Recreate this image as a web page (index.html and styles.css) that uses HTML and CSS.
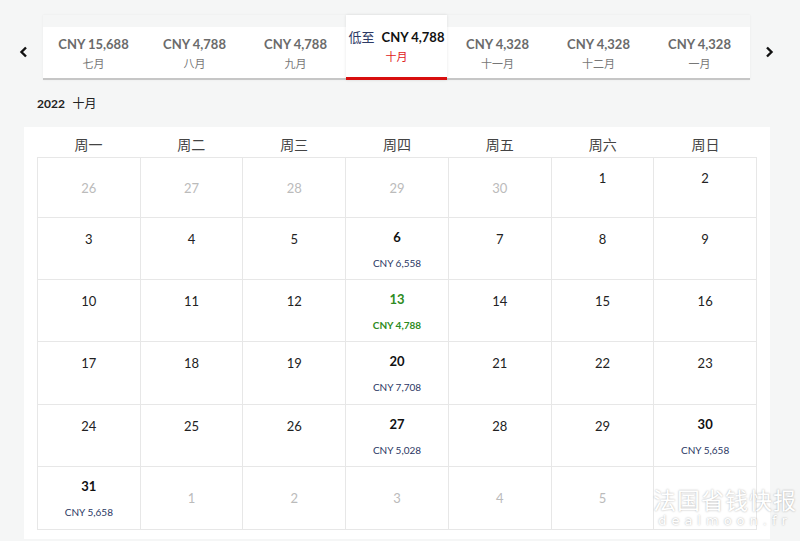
FILE: index.html
```html
<!DOCTYPE html>
<html lang="zh">
<head>
    <meta charset="UTF-8">
    <meta name="viewport" content="width=device-width, initial-scale=1.0">
    <title>低价日历</title>
    <link rel="stylesheet" href="styles.css">
</head>
<body>
    <div class="months">
        <div class="arrow"><svg width="9" height="12" viewBox="0 0 9 12"><path d="M7 1.5 L2.5 6 L7 10.5" fill="none" stroke="#111" stroke-width="2.4"/></svg></div>
        <div class="tabs">
            <div class="tab"><div class="tab-price">CNY 15,688</div><div class="tab-month">七月</div></div>
            <div class="tab"><div class="tab-price">CNY 4,788</div><div class="tab-month">八月</div></div>
            <div class="tab"><div class="tab-price">CNY 4,788</div><div class="tab-month">九月</div></div>
            <div class="tab active"><div class="tab-price"><span class="from">低至</span>CNY 4,788</div><div class="tab-month">十月</div></div>
            <div class="tab"><div class="tab-price">CNY 4,328</div><div class="tab-month">十一月</div></div>
            <div class="tab"><div class="tab-price">CNY 4,328</div><div class="tab-month">十二月</div></div>
            <div class="tab"><div class="tab-price">CNY 4,328</div><div class="tab-month">一月</div></div>
        </div>
        <div class="arrow right"><svg width="9" height="12" viewBox="0 0 9 12"><path d="M2 1.5 L6.5 6 L2 10.5" fill="none" stroke="#111" stroke-width="2.4"/></svg></div>
    </div>

    <h3 class="title"><b>2022</b> 十月</h3>

    <div class="panel">
        <div class="weekdays">
            <div>周一</div><div>周二</div><div>周三</div><div>周四</div><div>周五</div><div>周六</div><div>周日</div>
        </div>
        <div class="grid">
            <div class="cell out"><div class="num">26</div></div>
            <div class="cell out"><div class="num">27</div></div>
            <div class="cell out"><div class="num">28</div></div>
            <div class="cell out"><div class="num">29</div></div>
            <div class="cell out"><div class="num">30</div></div>
            <div class="cell"><div class="num">1</div><div class="price empty"></div></div>
            <div class="cell"><div class="num">2</div><div class="price empty"></div></div>

            <div class="cell"><div class="num">3</div><div class="price empty"></div></div>
            <div class="cell"><div class="num">4</div><div class="price empty"></div></div>
            <div class="cell"><div class="num">5</div><div class="price empty"></div></div>
            <div class="cell has"><div class="num">6</div><div class="price">CNY 6,558</div></div>
            <div class="cell"><div class="num">7</div><div class="price empty"></div></div>
            <div class="cell"><div class="num">8</div><div class="price empty"></div></div>
            <div class="cell"><div class="num">9</div><div class="price empty"></div></div>

            <div class="cell"><div class="num">10</div><div class="price empty"></div></div>
            <div class="cell"><div class="num">11</div><div class="price empty"></div></div>
            <div class="cell"><div class="num">12</div><div class="price empty"></div></div>
            <div class="cell has low"><div class="num">13</div><div class="price">CNY 4,788</div></div>
            <div class="cell"><div class="num">14</div><div class="price empty"></div></div>
            <div class="cell"><div class="num">15</div><div class="price empty"></div></div>
            <div class="cell"><div class="num">16</div><div class="price empty"></div></div>

            <div class="cell"><div class="num">17</div><div class="price empty"></div></div>
            <div class="cell"><div class="num">18</div><div class="price empty"></div></div>
            <div class="cell"><div class="num">19</div><div class="price empty"></div></div>
            <div class="cell has"><div class="num">20</div><div class="price">CNY 7,708</div></div>
            <div class="cell"><div class="num">21</div><div class="price empty"></div></div>
            <div class="cell"><div class="num">22</div><div class="price empty"></div></div>
            <div class="cell"><div class="num">23</div><div class="price empty"></div></div>

            <div class="cell"><div class="num">24</div><div class="price empty"></div></div>
            <div class="cell"><div class="num">25</div><div class="price empty"></div></div>
            <div class="cell"><div class="num">26</div><div class="price empty"></div></div>
            <div class="cell has"><div class="num">27</div><div class="price">CNY 5,028</div></div>
            <div class="cell"><div class="num">28</div><div class="price empty"></div></div>
            <div class="cell"><div class="num">29</div><div class="price empty"></div></div>
            <div class="cell has"><div class="num">30</div><div class="price">CNY 5,658</div></div>

            <div class="cell has"><div class="num">31</div><div class="price">CNY 5,658</div></div>
            <div class="cell out"><div class="num">1</div></div>
            <div class="cell out"><div class="num">2</div></div>
            <div class="cell out"><div class="num">3</div></div>
            <div class="cell out"><div class="num">4</div></div>
            <div class="cell out"><div class="num">5</div></div>
            <div class="cell out"></div>
        </div>
    </div>

    <div class="watermark">
        <div class="wm-cn">法国省钱快报</div>
        <div class="wm-en">dealmoon.fr</div>
    </div>
</body>
</html>
```

FILE: styles.css
```css
* {
    margin: 0;
    padding: 0;
    box-sizing: border-box;
}

body {
    background-color: #f5f6f6;
    font-family: "Lato", "Noto Sans CJK SC", sans-serif;
    color: #222;
    width: 800px;
    height: 541px;
    overflow: hidden;
    position: relative;
}

.months {
    display: flex;
    align-items: flex-end;
    padding-top: 15px;
}

.arrow {
    width: 43px;
    height: 53px;
    display: flex;
    align-items: center;
    justify-content: center;
    padding-bottom: 4px;
    padding-left: 3px;
}

.arrow.right {
    width: 50px;
    justify-content: flex-start;
    padding-left: 15px;
}

.tabs {
    display: flex;
    align-items: flex-end;
    width: 707px;
    box-shadow: 0 0 2px rgba(0, 0, 0, 0.06);
}

.tab {
    width: 101px;
    height: 53px;
    background-color: #fff;
    border-bottom: 2px solid #c6c6c6;
    text-align: center;
    padding-top: 9px;
}

.tab-price {
    font-size: 13px;
    font-weight: bold;
    color: #6b6b6b;
    line-height: 16px;
}

.tab-month {
    font-family: "Noto Sans CJK SC", sans-serif;
    font-size: 11px;
    color: #777;
    line-height: 18px;
    margin-top: 2px;
}

.tab.active {
    height: 65px;
    padding-top: 14px;
    border-bottom: 3px solid #d80f0f;
    position: relative;
    z-index: 1;
    box-shadow: 0 0 3px rgba(0, 0, 0, 0.1);
}

.tab.active .tab-price {
    color: #111;
}

.tab.active .tab-month {
    color: #e02020;
}

.from {
    font-family: "Noto Sans CJK SC", sans-serif;
    font-weight: normal;
    color: #2e3a66;
    margin-right: 7px;
}

.title {
    font-size: 12px;
    font-weight: normal;
    margin: 14px 0 0 37px;
    line-height: 18px;
    height: 33px;
    font-family: "Noto Sans CJK SC", sans-serif;
}

.title b {
    font-family: "Lato", sans-serif;
    font-size: 12px;
    margin-right: 5px;
}

.panel {
    background-color: #fff;
    margin-left: 24px;
    width: 746px;
    padding: 0 13px 9px;
}

.weekdays {
    display: grid;
    grid-template-columns: repeat(7, 1fr);
    height: 30px;
    padding-top: 5px;
    font-family: "Noto Sans CJK SC", sans-serif;
    font-size: 14px;
    line-height: 24px;
    color: #444;
    text-align: center;
}

.grid {
    display: grid;
    grid-template-columns: repeat(7, 1fr);
    grid-template-rows: 59px 61px 61px 62px 61px 62px;
    gap: 1px;
    background-color: #e7e7e7;
    border: 1px solid #e7e7e7;
}

.cell {
    background-color: #fff;
    display: flex;
    flex-direction: column;
    align-items: center;
    justify-content: center;
}

.num {
    font-size: 13px;
    line-height: 20px;
}

.price {
    font-size: 10px;
    line-height: 16px;
    margin-top: 8px;
    color: #2b3763;
}

.price.empty {
    height: 12px;
}

.out .num {
    color: #bbb;
}

.has .num {
    font-weight: bold;
    color: #111;
}

.low .num,
.low .price {
    color: #2e8b22;
    font-weight: bold;
}

.watermark {
    position: absolute;
    left: 650px;
    top: 486px;
    width: 150px;
    text-align: center;
    color: #fff;
    text-shadow: 0 0 2px rgba(0, 0, 0, 0.35);
}

.wm-cn {
    font-family: "Noto Sans CJK SC", sans-serif;
    font-size: 23px;
    line-height: 26px;
    letter-spacing: 1px;
}

.wm-en {
    font-family: "DejaVu Sans", sans-serif;
    font-size: 13px;
    line-height: 14px;
    margin-top: 2px;
    letter-spacing: 5px;
}
```
